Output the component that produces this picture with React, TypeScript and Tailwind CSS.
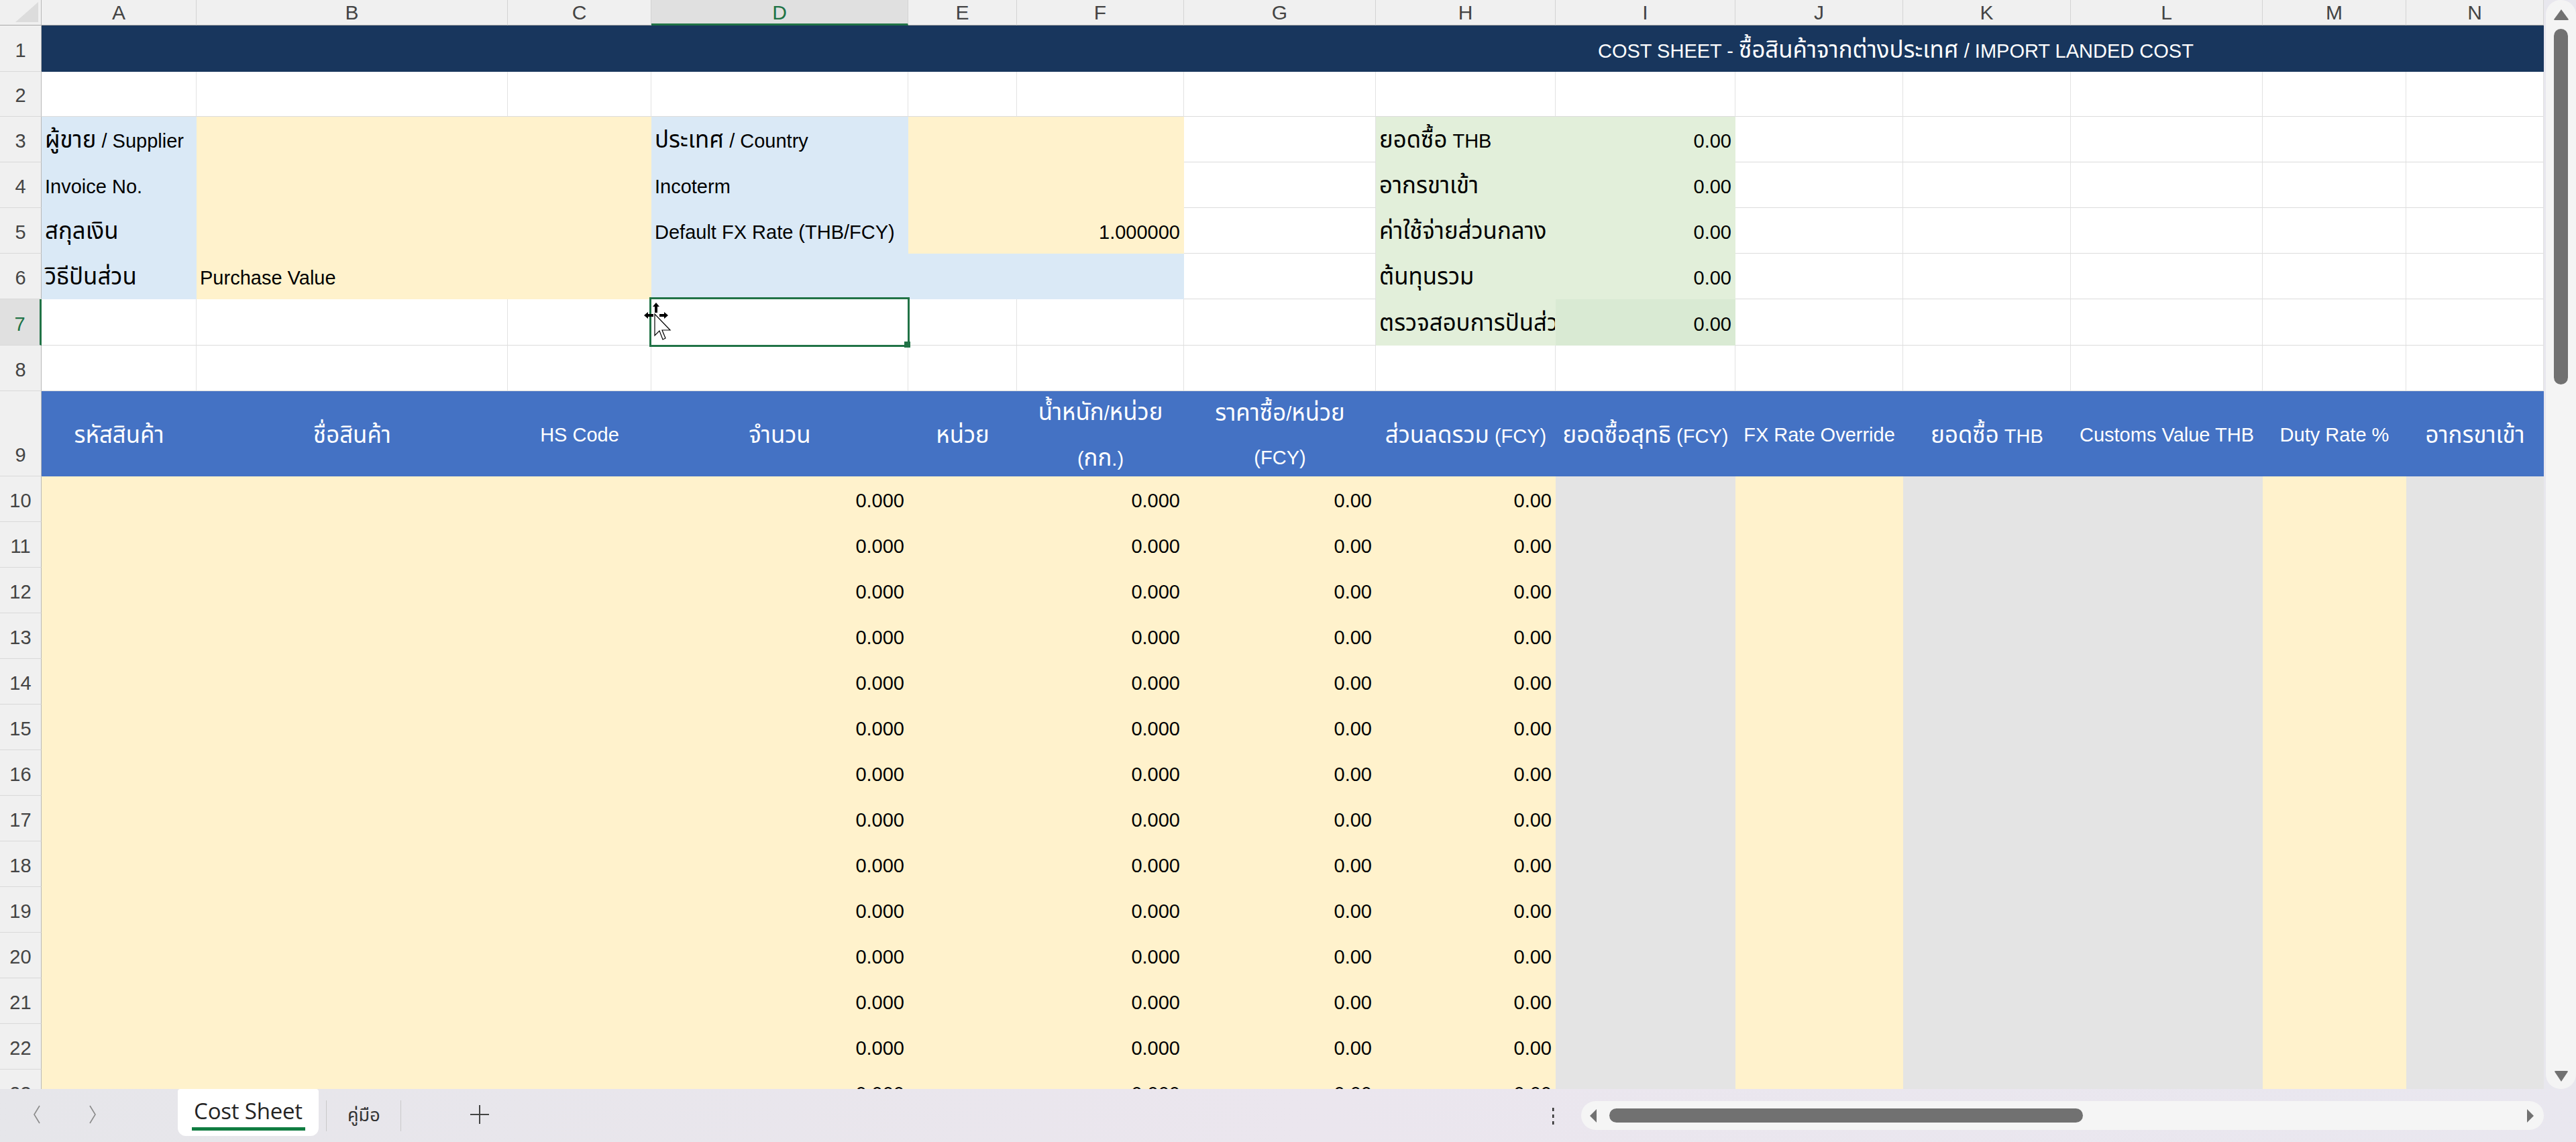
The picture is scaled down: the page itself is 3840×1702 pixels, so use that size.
import React from 'react'

type Fill = 'white' | 'blue' | 'yellow' | 'green' | 'green2' | 'gray' | 'navy' | 'head'

const fillClass: Record<Fill, string> = {
    white: 'bg-white border-r-[#e2e2e2] border-b-[#dcdcdc]',
    blue: 'bg-[#dae9f6] border-transparent',
    yellow: 'bg-[#fff2cc] border-transparent',
    green: 'bg-[#e2efda] border-transparent',
    green2: 'bg-[#d9ead3] border-transparent',
    gray: 'bg-[#e4e4e4] border-transparent',
    navy: 'bg-[#18365d] border-transparent text-white',
    head: 'bg-[#4472c4] border-transparent text-white',
}

const spanClass: Record<number, string> = {
    1: '',
    2: 'col-span-2',
    3: 'col-span-3',
    14: 'col-span-14',
}

interface CellSpec {
    fill: Fill
    text?: string
    right?: boolean
    span?: number
}

const COLS = ['A', 'B', 'C', 'D', 'E', 'F', 'G', 'H', 'I', 'J', 'K', 'L', 'M', 'N']

// Thai runs render a bit larger than the latin text next to them
function Th({ text }: { text: string }) {
    const parts = text.split(/([\u0E00-\u0E7F]+)/)
    return (
        <span>
            {parts.map((p, i) =>
                /[\u0E00-\u0E7F]/.test(p) ? (
                    <span key={i} className="text-[1.2em]">
                        {p}
                    </span>
                ) : (
                    <React.Fragment key={i}>{p}</React.Fragment>
                )
            )}
        </span>
    )
}

const W = (n: number): CellSpec[] => Array.from({ length: n }, () => ({ fill: 'white' as Fill }))

// rows 1-8 above the table header
const topRows: CellSpec[][] = [
    [{ fill: 'navy', span: 14 }],
    W(14),
    [
        { fill: 'blue', text: 'ผู้ขาย / Supplier' },
        { fill: 'yellow', span: 2 },
        { fill: 'blue', text: 'ประเทศ / Country' },
        { fill: 'yellow', span: 2 },
        { fill: 'white' },
        { fill: 'green', text: 'ยอดซื้อ THB' },
        { fill: 'green', text: '0.00', right: true },
        ...W(5),
    ],
    [
        { fill: 'blue', text: 'Invoice No.' },
        { fill: 'yellow', span: 2 },
        { fill: 'blue', text: 'Incoterm' },
        { fill: 'yellow', span: 2 },
        { fill: 'white' },
        { fill: 'green', text: 'อากรขาเข้า' },
        { fill: 'green', text: '0.00', right: true },
        ...W(5),
    ],
    [
        { fill: 'blue', text: 'สกุลเงิน' },
        { fill: 'yellow', span: 2 },
        { fill: 'blue', text: 'Default FX Rate (THB/FCY)' },
        { fill: 'yellow', span: 2, text: '1.000000', right: true },
        { fill: 'white' },
        { fill: 'green', text: 'ค่าใช้จ่ายส่วนกลาง' },
        { fill: 'green', text: '0.00', right: true },
        ...W(5),
    ],
    [
        { fill: 'blue', text: 'วิธีปันส่วน' },
        { fill: 'yellow', span: 2, text: 'Purchase Value' },
        { fill: 'blue', span: 3 },
        { fill: 'white' },
        { fill: 'green', text: 'ต้นทุนรวม' },
        { fill: 'green', text: '0.00', right: true },
        ...W(5),
    ],
    [
        ...W(7),
        { fill: 'green', text: 'ตรวจสอบการปันส่วน' },
        { fill: 'green2', text: '0.00', right: true },
        ...W(5),
    ],
    W(14),
]

const headers: string[][] = [
    ['รหัสสินค้า'],
    ['ชื่อสินค้า'],
    ['HS Code'],
    ['จำนวน'],
    ['หน่วย'],
    ['น้ำหนัก/หน่วย', '(กก.)'],
    ['ราคาซื้อ/หน่วย', '(FCY)'],
    ['ส่วนลดรวม (FCY)'],
    ['ยอดซื้อสุทธิ (FCY)'],
    ['FX Rate Override'],
    ['ยอดซื้อ THB'],
    ['Customs Value THB'],
    ['Duty Rate %'],
    ['อากรขาเข้า'],
]

const dataRow: CellSpec[] = [
    { fill: 'yellow' },
    { fill: 'yellow' },
    { fill: 'yellow' },
    { fill: 'yellow', text: '0.000', right: true },
    { fill: 'yellow' },
    { fill: 'yellow', text: '0.000', right: true },
    { fill: 'yellow', text: '0.00', right: true },
    { fill: 'yellow', text: '0.00', right: true },
    { fill: 'gray' },
    { fill: 'yellow' },
    { fill: 'gray' },
    { fill: 'gray' },
    { fill: 'yellow' },
    { fill: 'gray' },
]

function Cell({ spec, row, col }: { spec: CellSpec; row: number; col: number }) {
    const selected = row === 7 && col === 3
    return (
        <div
            className={`relative flex items-end pb-[14px] border-r border-b whitespace-nowrap text-[29px] leading-[34px] ${
                selected ? '' : 'overflow-hidden'
            } ${fillClass[spec.fill]} ${spanClass[spec.span ?? 1]} ${
                spec.right ? 'justify-end pr-[5px]' : 'pl-[5px]'
            }`}
        >
            {spec.text && <Th text={spec.text} />}
            {selected && (
                <>
                    <div className="absolute -top-[3px] -left-[3px] -right-[3px] -bottom-[3px] z-10 border-[3px] border-[#217346]" />
                    <div className="absolute -right-[4px] -bottom-[4px] z-20 h-[9px] w-[9px] bg-[#217346]" />
                    <svg className="absolute -left-[12px] top-[4px] z-30" width="46" height="64" viewBox="0 0 46 64">
                        <path d="M19 1 L14 7 L17 7 L17 16 L21 16 L21 7 L24 7 Z" fill="#000" />
                        <path d="M1 20 L7 15 L7 18 L15 18 L15 22 L7 22 L7 25 Z" fill="#000" />
                        <path d="M37 20 L31 15 L31 18 L24 18 L24 22 L31 22 L31 25 Z" fill="#000" />
                        <path d="M17 18 L17 50 L24 43 L29 56 L33 54 L28 42 L40 42 Z" fill="#fff" stroke="#000" strokeWidth="1.2" />
                    </svg>
                </>
            )}
        </div>
    )
}

function RowHead({ n }: { n: number }) {
    const sel = n === 7
    return (
        <div
            className={`flex items-end justify-center pb-[14px] border-b border-b-[#d9d9d9] text-[29px] leading-[34px] ${
                sel
                    ? 'bg-[#e0e0e0] text-[#217346] border-r-[3px] border-r-[#217346]'
                    : 'bg-[#f0f0f0] text-[#444] border-r border-r-[#b8b8b8]'
            }`}
        >
            {n}
        </div>
    )
}

function Chevron({ left }: { left?: boolean }) {
    return (
        <svg width="14" height="28" viewBox="0 0 14 28">
            <polyline
                points={left ? '11,1 3,14 11,27' : '3,1 11,14 3,27'}
                fill="none"
                stroke="#8a8a8a"
                strokeWidth="1.6"
            />
        </svg>
    )
}

export default function App() {
    return (
        <div className="flex h-[1702px] w-[3840px] flex-col overflow-hidden bg-[#e8e7ee] font-['Liberation_Sans','Noto_Sans_Thai','Tahoma',sans-serif] text-black">
            <div className="flex h-[1623px]">
                {/* sheet grid */}
                <div className="w-[3792px] overflow-hidden bg-white">
                    <div className="grid grid-cols-[62px_231px_464px_214px_383px_162px_249px_286px_268px_268px_250px_250px_286px_214px_205px] grid-rows-[38px_69px_67px_68px_68px_68px_68px_69px_68px_127px_repeat(14,68px)]">
                        {/* corner */}
                        <div className="flex items-end justify-end border-r border-b border-r-[#b8b8b8] border-b-[#a8a8a8] bg-[#f0f0f0] pr-[4px] pb-[4px]">
                            <svg width="34" height="30" viewBox="0 0 34 30">
                                <path d="M34 0 L34 30 L0 30 Z" fill="#dcdcdc" />
                            </svg>
                        </div>
                        {COLS.map(c =>
                            c === 'D' ? (
                                <div
                                    key={c}
                                    className="flex items-center justify-center border-r border-r-[#d4d4d4] border-b-[3px] border-b-[#217346] bg-[#e0e0e0] pt-[2px] text-[30px] text-[#217346]"
                                >
                                    {c}
                                </div>
                            ) : (
                                <div
                                    key={c}
                                    className="flex items-center justify-center border-r border-b border-r-[#d4d4d4] border-b-[#a8a8a8] bg-[#f0f0f0] text-[30px] text-[#444]"
                                >
                                    {c}
                                </div>
                            )
                        )}

                        {/* rows 1-8 */}
                        {topRows.map((cells, i) => {
                            const r = i + 1
                            let col = 0
                            return (
                                <React.Fragment key={r}>
                                    <RowHead n={r} />
                                    {r === 1 ? (
                                        <div className="col-span-14 flex items-end bg-[#18365d] pb-[14px] pl-[2320px] text-[29px] leading-[34px] text-white whitespace-nowrap">
                                            <Th text="COST SHEET - ซื้อสินค้าจากต่างประเทศ / IMPORT LANDED COST" />
                                        </div>
                                    ) : (
                                        cells.map((c, j) => {
                                            const el = <Cell key={j} spec={c} row={r} col={col} />
                                            col += c.span ?? 1
                                            return el
                                        })
                                    )}
                                </React.Fragment>
                            )
                        })}

                        {/* table header row 9 */}
                        <RowHead n={9} />
                        {headers.map((h, i) => (
                            <div
                                key={i}
                                className="flex flex-col items-center justify-center overflow-hidden bg-[#4472c4] pt-[4px] text-center text-[29px] leading-[65px] text-white whitespace-nowrap"
                            >
                                {h.map(line => (
                                    <Th key={line} text={line} />
                                ))}
                            </div>
                        ))}

                        {/* data rows 10-23 */}
                        {Array.from({ length: 14 }, (_, k) => k + 10).map(r => (
                            <React.Fragment key={r}>
                                <RowHead n={r} />
                                {dataRow.map((c, j) => (
                                    <Cell key={j} spec={c} row={r} col={j} />
                                ))}
                            </React.Fragment>
                        ))}
                    </div>
                </div>

                {/* vertical scrollbar */}
                <div className="w-[48px] pl-[3px]">
                    <div className="flex h-full flex-col items-center rounded-[22px] bg-[#f4f4f4] pt-[13px] pb-[10px]">
                        <svg width="24" height="18" viewBox="0 0 24 18">
                            <path d="M12 1 L23 16 Q23 17 21 17 L3 17 Q1 17 1 16 Z" fill="#717171" />
                        </svg>
                        <div className="mt-[12px] h-[530px] w-[21px] rounded-full bg-[#717171]" />
                        <div className="flex-1" />
                        <svg width="22" height="18" viewBox="0 0 22 18">
                            <path d="M11 17 L21 2 Q21 1 19 1 L3 1 Q1 1 1 2 Z" fill="#717171" />
                        </svg>
                    </div>
                </div>
            </div>

            {/* sheet tabs bar */}
            <div className="flex h-[79px] bg-gradient-to-r from-[#e6e6ea] via-[#ebe6ee] to-[#e9e7ef]">
                <div className="mt-[24px] flex w-[265px] gap-[69px] pl-[48px]">
                    <Chevron left />
                    <Chevron />
                </div>
                <div className="flex h-[70px] w-[210px] flex-col items-center rounded-b-[12px] rounded-t-[4px] bg-white">
                    <span className="mt-[14px] font-['Open_Sans','Liberation_Sans',sans-serif] text-[33px] leading-[38px] tracking-[-0.2px] text-[#242424]">
                        Cost Sheet
                    </span>
                    <div className="mt-[5px] h-[5px] w-[169px] bg-[#107c41]" />
                </div>
                <div className="mt-[17px] ml-[11px] h-[46px] w-px bg-[#c9c9c9]" />
                <span className="mt-[22px] ml-[31px] text-[27px] leading-[34px] text-[#333]">คู่มือ</span>
                <div className="mt-[17px] ml-[30px] h-[46px] w-px bg-[#c9c9c9]" />
                <svg className="mt-[23px] ml-[102px]" width="30" height="30" viewBox="0 0 30 30">
                    <path d="M15 1 V29 M1 15 H29" stroke="#444" strokeWidth="2" />
                </svg>

                <div className="ml-auto mr-[48px] flex">
                    <svg className="mt-[28px]" width="6" height="26" viewBox="0 0 6 26">
                        <rect x="2" y="0" width="2.5" height="5" fill="#333" />
                        <rect x="2" y="10" width="2.5" height="5" fill="#333" />
                        <rect x="2" y="20" width="2.5" height="5" fill="#333" />
                    </svg>
                    <div className="mt-[18px] ml-[39px] flex h-[43px] w-[1435px] items-center rounded-full bg-[#f5f5f5] pr-[14px] pl-[12px]">
                        <svg width="12" height="22" viewBox="0 0 12 22">
                            <path d="M1 11 L11 1 L11 21 Z" fill="#717171" />
                        </svg>
                        <div className="ml-[18px] h-[21px] w-[706px] rounded-full bg-[#717171]" />
                        <div className="flex-1" />
                        <svg width="12" height="22" viewBox="0 0 12 22">
                            <path d="M11 11 L1 1 L1 21 Z" fill="#717171" />
                        </svg>
                    </div>
                </div>
            </div>
        </div>
    )
}
